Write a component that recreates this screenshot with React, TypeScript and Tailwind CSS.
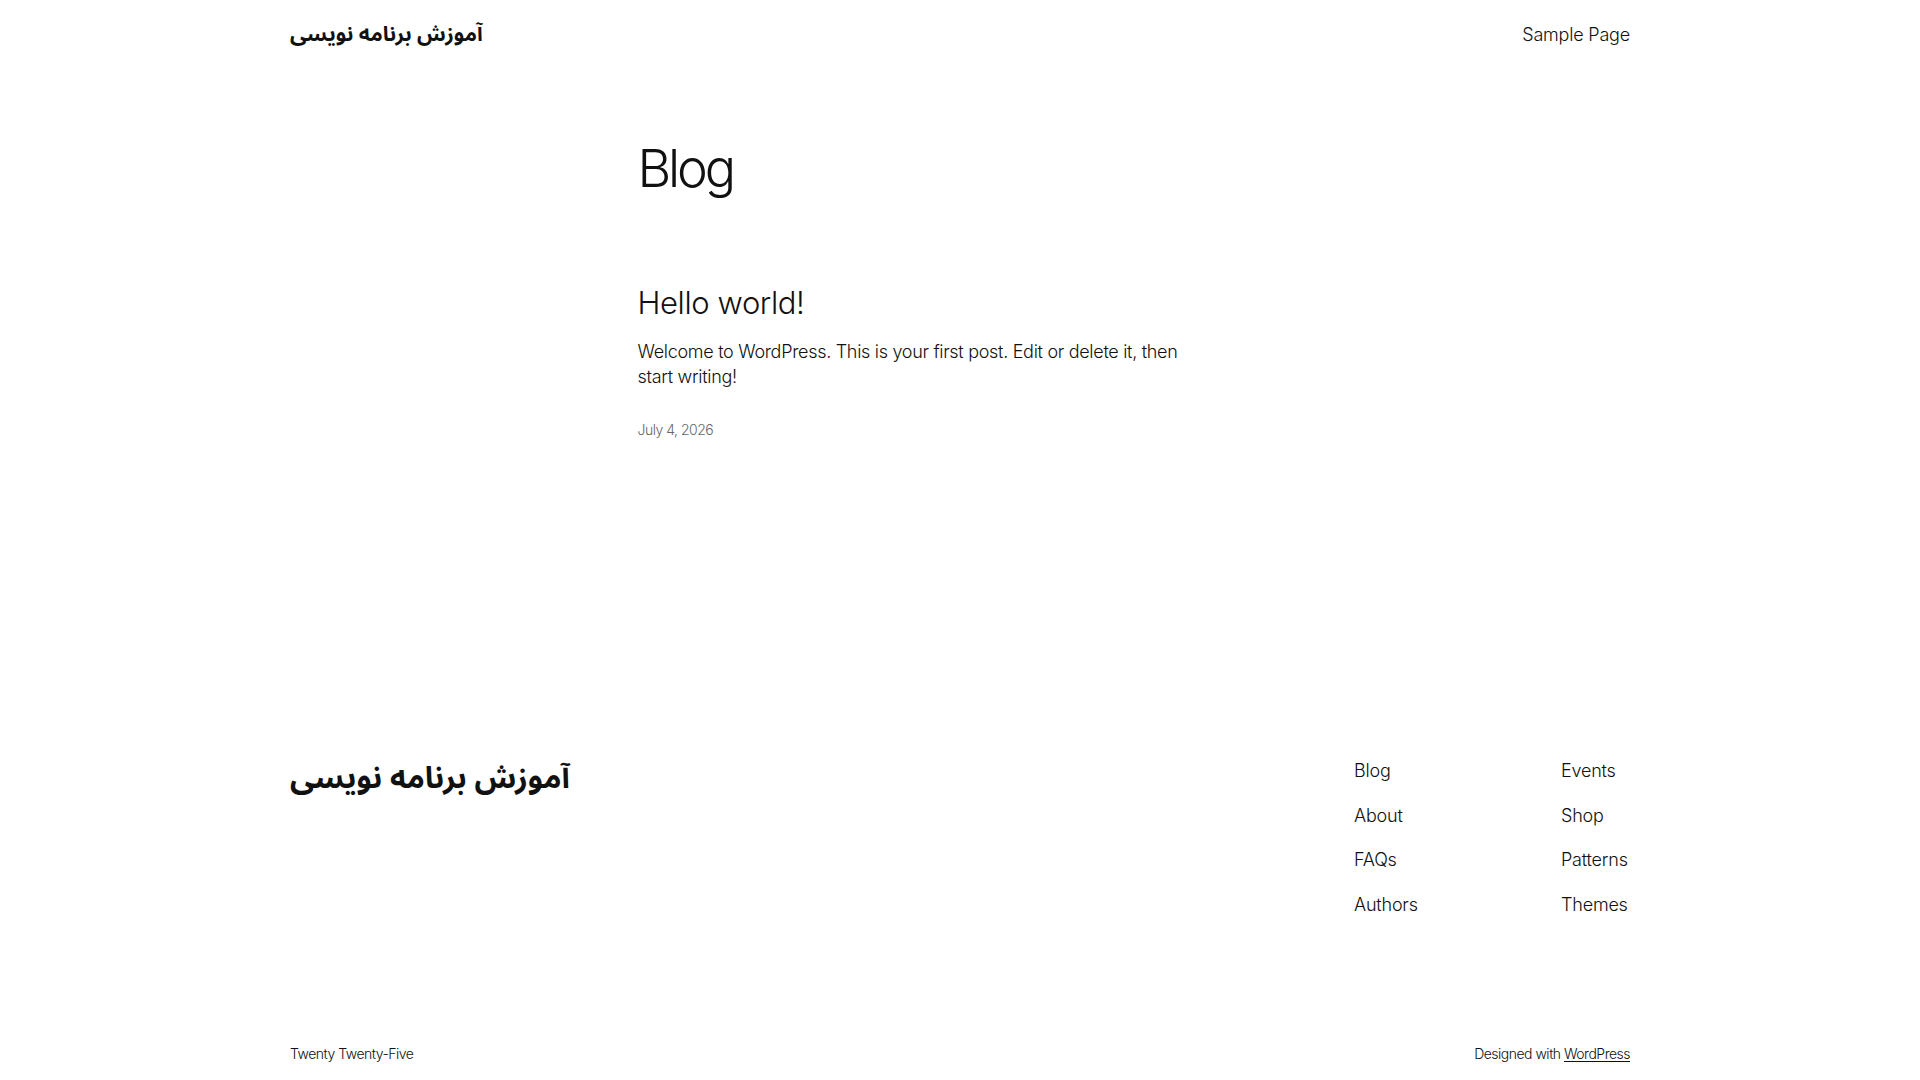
import React from "react";

const sans = "font-['Inter','Liberation_Sans',sans-serif]";
const fa = "font-['Noto_Sans_Arabic','Noto_Sans_Arabic_UI','Noto_Sans','DejaVu_Sans',sans-serif]";

export default function App() {
  return (
    <div className={`min-h-screen bg-white text-[#111111] font-light ${sans}`}>
      <header className="mx-auto flex h-[68px] w-[1340px] items-center justify-between">
        <a dir="rtl" className={`${fa} text-[21px] font-bold leading-none`}>
          آموزش برنامه نویسی
        </a>
        <nav className="text-[18px] tracking-[-0.2px]">Sample Page</nav>
      </header>

      <main className="mx-auto w-[645px] pt-[70px]">
        <h1 className="text-[52px] font-light leading-[1.2] tracking-[-3.2px]">Blog</h1>
        <article className="mt-[84px]">
          <h2 className="text-[31px] font-light leading-[1.2] tracking-[-0.4px]">Hello world!</h2>
          <p className="mt-[17.5px] text-[18px] leading-[25px] tracking-[-0.3px]">
            Welcome to WordPress. This is your first post. Edit or delete it, then
            <br />
            start writing!
          </p>
          <div className="mt-[30px] text-[14px] tracking-[-0.5px] text-[#686868]">July 4, 2026</div>
        </article>
      </main>

      <footer className="mx-auto mt-[317px] w-[1340px]">
        <div className="flex items-start justify-between">
          <a dir="rtl" className={`${fa} mt-[7px] text-[30.5px] font-bold leading-none`}>
            آموزش برنامه نویسی
          </a>
          <div className="grid w-[276px] grid-cols-[207px_1fr] text-[18px] tracking-[-0.2px]">
            <div className="flex flex-col gap-[17.5px]">
              <span>Blog</span>
              <span>About</span>
              <span>FAQs</span>
              <span>Authors</span>
            </div>
            <div className="flex flex-col gap-[17.5px]">
              <span>Events</span>
              <span>Shop</span>
              <span>Patterns</span>
              <span>Themes</span>
            </div>
          </div>
        </div>
        <div className="mt-[125px] flex items-center justify-between text-[14px] tracking-[-0.5px]">
          <span>Twenty Twenty-Five</span>
          <span>
            Designed with <span className="underline underline-offset-2">WordPress</span>
          </span>
        </div>
      </footer>
    </div>
  );
}
